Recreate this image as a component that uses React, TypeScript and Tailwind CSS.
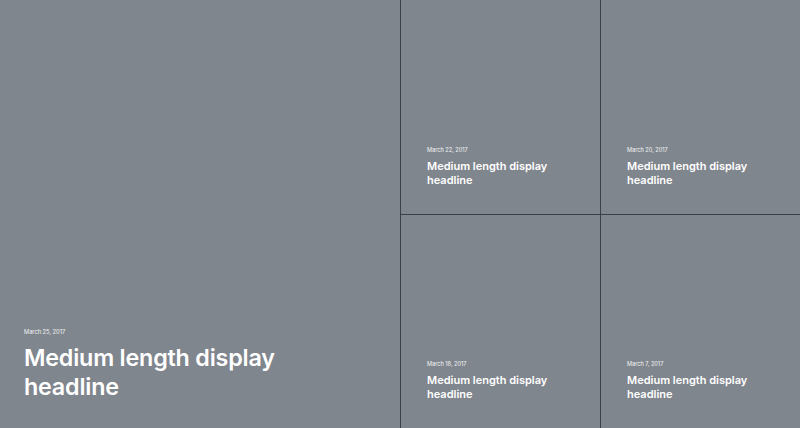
const posts = [
  { date: 'March 22, 2017', title: 'Medium length display headline' },
  { date: 'March 20, 2017', title: 'Medium length display headline' },
  { date: 'March 18, 2017', title: 'Medium length display headline' },
  { date: 'March 7, 2017', title: 'Medium length display headline' },
];

const App = () => {
  return (
    <div className="flex h-[428px] w-[800px] bg-[#3a414c] font-['Inter',sans-serif] text-white">
      {/* featured post */}
      <div className="flex w-[400px] flex-col justify-end bg-[#80868e] px-6 pb-[27px]">
        <p className="mb-[8px] text-[5.7px] leading-none text-white/90">March 25, 2017</p>
        <h1 className="w-[260px] text-[23.3px] font-semibold leading-[29px] tracking-[-0.2px]">
          Medium length display headline
        </h1>
      </div>

      <div className="ml-px grid flex-1 grid-cols-2 grid-rows-2 gap-px">
        {posts.map((post) => (
          <div key={post.date} className="flex flex-col justify-end bg-[#80868e] pb-[27px] pl-[26px]">
            <p className="mb-[5px] text-[5.6px] leading-none text-white/90">{post.date}</p>
            <h2 className="w-[130px] text-[11px] font-semibold leading-[14px]">{post.title}</h2>
          </div>
        ))}
      </div>
    </div>
  );
};

export default App;
